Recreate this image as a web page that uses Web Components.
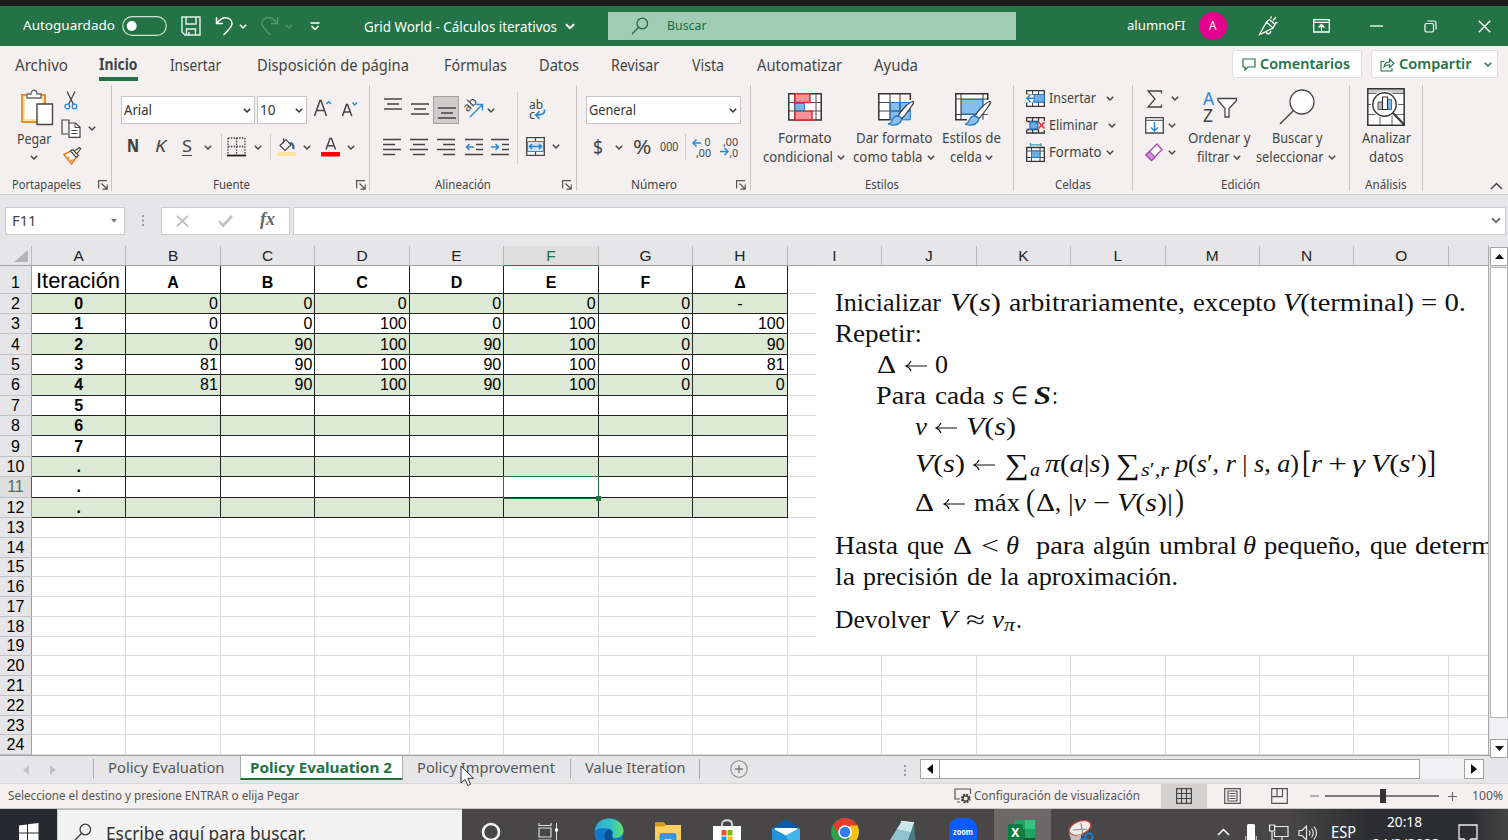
<!DOCTYPE html>
<html lang="es">
<head>
<meta charset="utf-8">
<title>Grid World - Cálculos iterativos</title>
<style>
html,body{margin:0;padding:0}
body{width:1508px;height:840px;overflow:hidden;background:#e6e6e8;font-family:"Noto Sans","Open Sans",sans-serif;color:#444}
excel-window{height:840px}
</style>
</head>
<body>
<excel-window></excel-window>
<script>
const ICONS = {
  chev:[8,5,'<path d="M.8.8 4 4 7.2.8" fill="none" stroke="currentColor" stroke-width="1.5"/>'],
  chevBig:[10,7,'<path d="M1 1.2 5 5.2 9 1.2" fill="none" stroke="currentColor" stroke-width="2"/>'],
  chevUp:[13,8,'<path d="M1 7 6.5 1.5 12 7" fill="none" stroke="currentColor" stroke-width="1.5"/>'],
  toggle:[45,20,'<rect x=".7" y=".7" width="43.6" height="18.6" rx="9.3" fill="none" stroke="#cfe3d7" stroke-width="1.2"/><circle cx="9.7" cy="10" r="5" fill="#fff"/>'],
  save:[20,20,'<path d="M1 1h18v18H4l-3-3zM5 1v7h10V1M5.500 19v-6h9v6M8 19v-3" fill="none" stroke="#e8f2ec" stroke-width="1.4"/>'],
  undo:[18,20,'<path d="M1.500 1v6.500h6.500M1.800 7.300C5 3 8 1.500 11 1.700c4 .3 6 3.300 6 6 0 3-3 6-8.500 11.300" fill="none" stroke="currentColor" stroke-width="1.5"/>'],
  redo:[18,20,'<path d="M16.500 1v6.500H10M16.200 7.300C13 3 10 1.500 7 1.700c-4 .3-6 3.300-6 6 0 3 3 6 8.500 11.300" fill="none" stroke="#57966f" stroke-width="1.4"/>'],
  custom:[10,9,'<path d="M.5 1h9M1.500 4 5 7.500 8.500 4" fill="none" stroke="#fff" stroke-width="1.5"/>'],
  lens:[18,18,'<circle cx="11.300" cy="6.500" r="5.300" fill="none" stroke="currentColor" stroke-width="1.2"/><path d="M7.500 10.500 1 17" stroke="currentColor" stroke-width="1.3"/>'],
  pen:[20,20,'<path d="M1.500 18.500 8.500 6l6.500 6L4 17.500zM8.500 6l3-2.500 5.500 5-2 3.500M8 16c1 2.500 4 2.500 5-1M12.500 2.500l1-2M15 4.500 18 1M17 7l2.500-.5" fill="none" stroke="#fff" stroke-width="1.3"/>'],
  ribbonMode:[17,14,'<path d="M.7.7h15.600v12.300H.7zM.7 3.300h15.600M8.500 12V6M5.500 8.500l3-3 3 3" fill="none" stroke="#fff" stroke-width="1.3"/>'],
  min:[13,2,'<path d="M0 1h13" stroke="#fff" stroke-width="1.300"/>'],
  restore:[13,13,'<rect x="1" y="3.500" width="8.500" height="8.500" rx="1.500" fill="none" stroke="#fff" stroke-width="1.2"/><path d="M3.500 1h6.500q2 0 2 2v6.500" fill="none" stroke="#fff" stroke-width="1.2"/>'],
  close:[13,13,'<path d="m.8.8 11.400 11.400M12.200.8.8 12.200" stroke="#fff" stroke-width="1.400"/>'],
  comment:[14,13,'<path d="M1 1h12v8H6l-3 3V9H1z" fill="none" stroke="#217346" stroke-width="1.2"/>'],
  share:[15,15,'<path d="M4.500 4.500H1V14h11v-3M4 10c.5-3.500 2.500-5 5.500-5V2l4.500 4.500-4.500 4V7.800C7 7.800 5.500 8.300 4 10z" fill="none" stroke="#217346" stroke-width="1.1"/>'],
  paste:[34,37,'<path d="M2 6h23v27H2z" fill="#fbe3a8" stroke="#e8912d" stroke-width="2"/><path d="M5 9h17v21H5z" fill="#fff"/><path d="M7 9V5h4c0-5 6-5 6 0h4v4z" fill="#fff" stroke="#666" stroke-width="1.300"/><path d="M17 15h15.500v20.500H17z" fill="#fff" stroke="#444" stroke-width="1.400"/>'],
  cut:[14,19,'<path d="M3 .5 9.500 13.500M11 .5 4.500 13.500" stroke="#444" stroke-width="1.300"/><circle cx="3.300" cy="15.500" r="2.300" fill="none" stroke="#2b88d8" stroke-width="1.300"/><circle cx="10.500" cy="15.500" r="2.300" fill="none" stroke="#2b88d8" stroke-width="1.300"/>'],
  copy:[20,19,'<path d="M8 4V1H1v14h6" fill="none" stroke="#444" stroke-width="1.200"/><path d="M8 4h6.500l4.500 4v10.300H8z" fill="#fff" stroke="#444" stroke-width="1.200"/><path d="M14 4v4.500h5M10.500 11.500h6M10.500 14.500h6" fill="none" stroke="#444"/>'],
  brush:[20,19,'<path d="M2 8.500 9 5l5.500 6-5 7z" fill="#fff" stroke="#e07b1c" stroke-width="1.500"/><path d="m2 8.500 3 3 2-1 .5 3.500 4-1-2 5z" fill="#f2a04a"/><path d="m8.500 5 2-1.500 6 6-2 2zM12.500 5 17.500 1.500l1.200 1.300L15 7.500" fill="#fff" stroke="#444" stroke-width="1.200"/>'],
  fontUp:[19,18,'<path d="M1.500 17 7 1.500h1L13.500 17M3.300 11.500h8.500" fill="none" stroke="#444" stroke-width="1.500"/><path d="m13.500 5 2.200-2.500L18 5" fill="none" stroke="#2b88d8" stroke-width="1.400"/>'],
  fontDown:[18,16,'<path d="M1.500 15 5.500 3.500h1L10.800 15M3 11h6.500" fill="none" stroke="#444" stroke-width="1.500"/><path d="m11.500 1.500 2.200 2.500L16 1.500" fill="none" stroke="#2b88d8" stroke-width="1.400"/>'],
  border:[19,20,'<path d="M1 1h17M1 9.500h17M1 1v17M9.500 1v17M18 1v17" stroke="#444" stroke-width="1.300" stroke-dasharray="1.500 1.300"/><path d="M0 18.500h19" stroke="#222" stroke-width="1.800"/>'],
  fill:[20,20,'<path d="m3 8.500 6-6 5 5.500-6 5.500zM6.500 1.500v5" fill="#fff" stroke="#444" stroke-width="1.200"/><path d="M13 6c3 0 3.500 2 3.500 6" fill="none" stroke="#1d6299" stroke-width="2.200"/><path d="M0 15h19v4H0z" fill="#fbe199"/>'],
  fontColor:[20,20,'<path d="m5 12.500 4-11h1.500l4 11M6.500 8.800h6.500" fill="none" stroke="#444" stroke-width="1.400"/><path d="M0 15h19v4.500H0z" fill="#f00"/>'],
  alTop:[18,12,'<path d="M0 1h18M3 6h12M0 11h18" stroke="#444" stroke-width="1.300"/>'],
  orient:[20,20,'<path d="m6 19 12-12M12.500 6.500h6v6" fill="none" stroke="#2b88d8" stroke-width="1.400"/><text x="0" y="0" transform="translate(3.500 14.500) rotate(-45)" font-size="12.500" fill="#444">ab</text>'],
  wrap:[18,20,'<text x="1" y="8.500" font-size="12.500" fill="#444" textLength="14" lengthAdjust="spacingAndGlyphs">ab</text><text x="1" y="18.500" font-size="12.500" fill="#444" textLength="6" lengthAdjust="spacingAndGlyphs">c</text><path d="M16.500 9.500c.5 4-2 5.500-8 5.500M11.500 11.300 7.800 15l3.700 3.700" fill="none" stroke="#2b88d8" stroke-width="1.700"/>'],
  alLeft:[18,18,'<path d="M0 1.500h18M0 6.500h12M0 11.500h18M0 16.500h12" stroke="#444" stroke-width="1.300"/>'],
  alCenter:[18,18,'<path d="M0 1.500h18M3 6.500h12M0 11.500h18M3 16.500h12" stroke="#444" stroke-width="1.300"/>'],
  alRight:[18,18,'<path d="M0 1.500h18M6 6.500h12M0 11.500h18M6 16.500h12" stroke="#444" stroke-width="1.300"/>'],
  outdent:[18,18,'<path d="M0 1.500h18M11 6.500h7M11 11.500h7M0 16.500h18" stroke="#444" stroke-width="1.300"/><path d="M9 9H1.500M4.500 6 1.500 9l3 3" fill="none" stroke="#2b88d8" stroke-width="1.500"/>'],
  indent:[18,18,'<path d="M0 1.500h18M11 6.500h7M11 11.500h7M0 16.500h18" stroke="#444" stroke-width="1.300"/><path d="M0 9h7.500M4.500 6l3 3-3 3" fill="none" stroke="#2b88d8" stroke-width="1.500"/>'],
  merge:[19,19,'<path d="M.7.7h17.600v17.600H.7zM9.500.7v17.600" fill="#fff" stroke="#444" stroke-width="1.300"/><path d="M1.500 4.500h16v10h-16z" fill="#cfe5f7" stroke="#2b88d8"/><path d="M3.500 9.500h12M6 7 3.500 9.500 6 12M13 7l2.500 2.500L13 12" fill="none" stroke="#1f7fd0" stroke-width="1.400"/>'],
  decUp:[20,20,'<path d="M9 6H1M4.500 2.500 1 6l3.500 3.500" fill="none" stroke="#2b88d8" stroke-width="1.500"/><text x="12.500" y="9" font-size="11.500" fill="#444" textLength="6" lengthAdjust="spacingAndGlyphs">0</text><text x="4" y="19.500" font-size="11.500" fill="#444" textLength="15" lengthAdjust="spacingAndGlyphs">,00</text>'],
  decDown:[20,20,'<path d="M1 14.500h8M5.500 11 9 14.500 5.500 18" fill="none" stroke="#2b88d8" stroke-width="1.500"/><text x="4" y="9" font-size="11.500" fill="#444" textLength="15" lengthAdjust="spacingAndGlyphs">,00</text><text x="10.500" y="19.500" font-size="11.500" fill="#444" textLength="8.500" lengthAdjust="spacingAndGlyphs">,0</text>'],
  cond:[34,28,'<path d="M.8.800h32.400v26.200H.8z" fill="#fff"/><path d="M.8 9.500h32.400M.8 18h32.400M6.500.8v26.200M17 .8v26M28 .8v26.200" stroke="#555" stroke-width="1.100"/><path d="M.8.800h32.400v26.200H.8z" fill="none" stroke="#333" stroke-width="1.500"/><path d="M7 10h15v8H7z" fill="#fff"/><path d="M7 .8h15v8.700H7zM7 18h17v9H7z" fill="#fc9299" stroke="#e0262e" stroke-width="1.400"/><path d="M7 10.500h9.500v7H7z" fill="#7db4e8" stroke="#2b7cc8"/>'],
  tabla:[37,34,'<path d="M.8.800h31.500v26H.8z" fill="#fff"/><path d="M12 9.500h20.300v17.300H12z" fill="#83bdf0"/><path d="M.8 9.500h31.500M.8 18h31.500M12 .8v26M22 .8v26" stroke="#444" stroke-width="1.100"/><path d="M12 9.500h20.300v17.300H12zM12 18h20M22 9.500v17" fill="none" stroke="#2478c5" stroke-width="1"/><path d="M32.300 7V.8H.8v26H12" fill="none" stroke="#333" stroke-width="1.500"/><path d="M20 23C24 16 31 9.500 34.500 8.500c2 0 1 2-.5 4-3 4.500-6 9-10 13z" fill="#fff" stroke="#444" stroke-width="1.300"/><path d="M19 23c4 0 6 3 3.500 6-2.500 3-8 4-12.500 2 3 0 4-3 5-5.500 1-2 2.500-2.500 4-2.500z" fill="#8cc0ef" stroke="#2478c5" stroke-width="1.300"/>'],
  celda:[38,34,'<path d="M.8.800h32v26H.8z" fill="#fff"/><path d="M.8 6h32M.8 21.500h32M6 .8v26M28 .8v26" stroke="#444" stroke-width="1.100"/><path d="M6.500 6.500h21V21h-21z" fill="#83bdf0" stroke="#2478c5"/><path d="M32.800 7V.8h-32v26H12" fill="none" stroke="#333" stroke-width="1.500"/><path d="M20 23C24 16 31 9.500 34.500 8.500c2 0 1 2-.5 4-3 4.500-6 9-10 13z" fill="#fff" stroke="#444" stroke-width="1.300"/><path d="M19 23c4 0 6 3 3.500 6-2.500 3-8 4-12.500 2 3 0 4-3 5-5.500 1-2 2.500-2.500 4-2.500z" fill="#8cc0ef" stroke="#2478c5" stroke-width="1.300"/>'],
  insCell:[19,18,'<path d="M.7.7h17.600v15.600H.7z" fill="#fff"/><path d="M.7 4.500h17.600M.7 12h17.600M6.500.7v16M12.500.7v16" stroke="#444" stroke-width="1"/><path d="M.7.700h17.600v15.600H.7z" fill="none" stroke="#333" stroke-width="1.300"/><path d="M8 4.500h10.300V12H8z" fill="#6eaee8" stroke="#2478c5"/><path d="M0 4.500h7v8H0z" fill="#fff"/><path d="M9 8.300H1M4.500 4.500.8 8.300 4.500 12" fill="none" stroke="#2b88d8" stroke-width="1.500"/>'],
  delCell:[19,17,'<path d="M.7 4V.7h17.600V4M.7 13v3h17.600v-3M6.500.7v3M12.500.7v3M6.500 13v3M12.500 13v3M.7 4.500h12M.7 12.500h12" fill="none" stroke="#333" stroke-width="1.300"/><path d="M4 5h5c4 0 4 7 0 7H4z" fill="#6eaee8" stroke="#2478c5" stroke-width="1.300"/><path d="m12.500 5 6 6.500M18.500 5l-6 6.500" stroke="#e8353e" stroke-width="1.800"/>'],
  fmtCell:[19,19,'<path d="M.7 4.500h17.600v13.800H.7z" fill="#fff" stroke="#333" stroke-width="1.300"/><path d="M.7 8h17.600M.7 14.500h17.600M5.500 4.500v14M14 4.500v14" stroke="#444"/><path d="M5.500 8H14v6.500H5.500z" fill="#6eaee8" stroke="#2478c5"/><path d="M4.500 1.800h10.500M4.500 0v3.500M15 0v3.500" stroke="#3a9ab8" stroke-width="1.200"/>'],
  sigma:[16,18,'<path d="M14.500 3.500V1H1l7 8-7 8h13.500v-2.500" fill="none" stroke="#444" stroke-width="1.300"/>'],
  fillDown:[19,17,'<path d="M.7.700h17.600v15.300H.7z" fill="#fff" stroke="#444" stroke-width="1.300"/><path d="M.7 3.300h17.600" stroke="#444"/><path d="M9.500 5v9M6 10.500 9.500 14l3.500-3.500" fill="none" stroke="#2b88d8" stroke-width="1.500"/>'],
  eraser:[18,19,'<path d="M1 12 12 1l5 5.500L6.500 17.500z" fill="#fff" stroke="#a54eb0" stroke-width="1.400"/><path d="m1 12 3.500-3.500 5.500 5.500-3.500 3.500z" fill="#d78fe0" stroke="#a54eb0" stroke-width="1.200"/>'],
  sortFilter:[35,34,'<text x="0" y="14.500" font-size="17.500" fill="#2b88d8">A</text><text x="0" y="31.500" font-size="17.500" fill="#444">Z</text><path d="M15 8.500h18.500v2L26 18.500V27h-4v-8.500L15 10.500z" fill="#fff" stroke="#444" stroke-width="1.300"/>'],
  find:[36,36,'<circle cx="23" cy="13" r="12" fill="#fdfdfd" stroke="#444" stroke-width="1.300"/><path d="M14.500 21.500 1 35" stroke="#444" stroke-width="1.500"/>'],
  analyze:[38,38,'<path d="M.8.800h36.400v36.400H.8z" fill="#fff"/><path d="M1 1h36v4.500H1z" fill="#c9c9c9"/><path d="M.8 5.500h36.400M.8 16.500h36.400M.8 26.500h36.400M13 26v11M25 26v11" stroke="#666" stroke-width="1"/><path d="M.8.800h36.400v36.400H.8z" fill="none" stroke="#333" stroke-width="1.500"/><circle cx="17.500" cy="16.500" r="13.500" fill="#fff"/><circle cx="17.500" cy="16.500" r="11.700" fill="#fff" stroke="#333" stroke-width="1.400"/><path d="M11 14h4.500v7.500H11z" fill="#bbb" stroke="#555"/><path d="M20.500 11.500h4v10h-4z" fill="#83bdf0" stroke="#2478c5"/><path d="M15.500 9h5v12.500h-5z" fill="#fff" stroke="#333" stroke-width="1.200"/><path d="m26 25 11.500 12" stroke="#333" stroke-width="2"/>'],
  launch:[10,10,'<path d="M.6 8.500V.6H9M3.500 3.500 9 9M9.200 4.500v4.700H4.500" fill="none" stroke="#555" stroke-width="1.200"/>'],
  dots:[2,11,'<path d="M0 0h2v2H0zM0 4.500h2v2H0zM0 9h2v2H0z" fill="#999"/>'],
  cancel:[13,12,'<path d="m1 .8 11 10.500M12 .8 1 11.300" stroke="#bdbdbd" stroke-width="1.800"/>'],
  check:[15,12,'<path d="m1 6 4 4.500L14 1" fill="none" stroke="#c2c2c2" stroke-width="2.600"/>'],
  caret:[6,4,'<path d="M0 0h6L3 3.500z" fill="#777"/>'],
  triL:[6,10,'<path d="M6 0v10L0 5z" fill="currentColor"/>'],
  triR:[6,10,'<path d="M0 0v10l6-5z" fill="currentColor"/>'],
  triU:[9,5,'<path d="M0 5h9L4.500 0z" fill="#111"/>'],
  triD:[9,5,'<path d="M0 0h9L4.500 5z" fill="#111"/>'],
  corner:[14,12,'<path d="M14 0v12H0z" fill="#b4b4b6"/>'],
  plus:[18,18,'<circle cx="9" cy="9" r="8.200" fill="none" stroke="#888" stroke-width="1.100"/><path d="M9 5v8M5 9h8" stroke="#777" stroke-width="1.300"/>'],
  display:[18,16,'<path d="M6 11H1V1h15.500v5M3 14h3" fill="none" stroke="#555" stroke-width="1.200"/><circle cx="11.700" cy="10.500" r="3.700" fill="none" stroke="#444" stroke-width="2.400" stroke-dasharray="1.900 1"/><circle cx="11.700" cy="10.500" r="2.600" fill="none" stroke="#444" stroke-width="1.200"/>'],
  vNormal:[16,16,'<path d="M.6.600h14.800v14.800H.6zM.6 5.500h14.800M.6 10.500h14.800M5.500.6v14.800M10.500.6v14.800" fill="none" stroke="#444" stroke-width="1.200"/>'],
  vPage:[17,16,'<path d="M.7.700h15.600v14.600H.7zM4 3h9v10H4zM5.500 5.500h6M5.500 8h6M5.500 10.500h6" fill="none" stroke="#555" stroke-width="1.200"/>'],
  vBreak:[17,16,'<path d="M.7.700h15.600v14.600H.7zM6 .7v8M11.500.7v8H.7" fill="none" stroke="#555" stroke-width="1.200"/>'],
  minus:[9,2,'<path d="M0 1h9" stroke="#777" stroke-width="1.100"/>'],
  plusS:[9,9,'<path d="M0 4.500h9M4.500 0v9" stroke="#666" stroke-width="1.100"/>'],
  slider:[114,14,'<path d="M0 7h114" stroke="#555" stroke-width="1.600"/><path d="M55 0h6v14h-6z" fill="#333"/>'],
  win:[20,20,'<path d="M0 2.500 8 1.500v8H0zM9 1.300 19.500 0v9.500H9zM0 10.500h8v8.300L0 17.500zM9 10.500h10.500V20L9 18.800z" fill="#fff"/>'],
  cortana:[20,20,'<circle cx="10" cy="10" r="8" fill="none" stroke="#f4f4f4" stroke-width="2.600"/>'],
  taskview:[20,20,'<path d="M1 0v2.500h12V0M1 20v-3h12v3M1 5h12v9H1z" fill="none" stroke="#ddd" stroke-width="1.200"/><path d="M18.500 0v20" stroke="#ddd"/><path d="M17 5.500h3v3h-3z" fill="#fff"/>'],
  edge:[30,30,'<defs><linearGradient id="g" x1="0" x2="1"><stop offset="0" stop-color="#2ba5e0"/><stop offset=".6" stop-color="#35c5c0"/><stop offset="1" stop-color="#66e06a"/></linearGradient></defs><circle cx="15" cy="15" r="14.500" fill="#1277c8"/><path d="M.5 13C2 4 8 .5 15 .5c8 0 14.500 5.500 14.500 12 0 5-4 7.500-9 7.500-3 0-4-1.500-2.500-3 2-3-.5-6.500-5-6.500C7 9.500 2 11.500.5 13z" fill="url(#g)"/><path d="M18 17c2-3-.5-5.500-3.500-5.500-4 2-5 7-3 11 2 3.500 6 5 10 4.500" fill="#0c4f94"/>'],
  folder:[26,24,'<path d="M0 1.500h9l2 2.500h15v20H0z" fill="#fbd064"/><path d="M0 1.500h9l2 2.500-2 1.500H0z" fill="#d99a1c"/><path d="M4.500 14q0-2 2-2h13q2 0 2 2v10h-5v-6h-7v6h-5z" fill="#3c94dd"/>'],
  store:[28,28,'<path d="M9 8V5c0-5 10-5 10 0v3" fill="none" stroke="#ddd" stroke-width="1.800"/><path d="M0 7h28v21H0z" fill="#fff"/><path d="M8.500 11h5v5.500h-5z" fill="#f25022"/><path d="M14.500 11h5v5.500h-5z" fill="#7fba00"/><path d="M8.500 17.500h5V23h-5z" fill="#00a4ef"/><path d="M14.500 17.500h5V23h-5z" fill="#ffb900"/>'],
  mail:[28,28,'<path d="M0 9 14 0l14 9-14 6z" fill="#0a5ba6"/><path d="M2.500 9h23v10h-23z" fill="#fff"/><path d="M0 9l14 7.500L28 9v19H0z" fill="#1f93dc"/><path d="M14 16.500 28 9v19H18z" fill="#42b4ee"/>'],
  chrome:[28,28,'<circle cx="14" cy="14" r="14" fill="#2ea04a"/><path d="M2 7a14 14 0 0 1 24.200 0L28 9H14l-5.500 8z" fill="#e33b2e"/><path d="M26.300 7.500A14 14 0 0 1 14 28l6-11-1.500-9.500z" fill="#fbc116"/><circle cx="14" cy="14" r="6.800" fill="#fff"/><circle cx="14" cy="14" r="5.300" fill="#2f7de9"/>'],
  note:[26,26,'<path d="M12 1 24 3 17 24 0 20z" fill="#8fc3cd"/><path d="M12 1 24 3l-3 9L7 9z" fill="#c9e6ea"/><path d="m24 3 1.500 20L17 24z" fill="#4d7a84"/><path d="M11 1.500 24 3" stroke="#e8e8e8" stroke-width="1.600"/>'],
  zoom:[28,28,'<rect width="28" height="29" rx="10" fill="#0b5cff"/><text x="4" y="17" font-size="8" font-weight="700" fill="#fff" textLength="20" lengthAdjust="spacingAndGlyphs">zoom</text>'],
  excel:[28,26,'<path d="M7 0h20v26H7z" fill="#21a366"/><path d="M17 0h10v9H17z" fill="#33c481"/><path d="M7 9h10v9H7z" fill="#107c41"/><path d="M17 9h10v9H17z" fill="#21a366"/><path d="M7 18h20v8H7z" fill="#185c37"/><rect y="4" width="15" height="17" rx="1.500" fill="#107c41"/><text x="3.200" y="16.500" font-size="12" font-weight="700" fill="#fff">X</text>'],
  snip:[27,26,'<ellipse cx="12" cy="8" rx="11.500" ry="6.500" transform="rotate(-22 12 8)" fill="#eee" stroke="#c4463a" stroke-width="1.300"/><path d="M13 3l2 13M5 10l14-1" stroke="#888" stroke-width="1.200"/><path d="M1 13q5 5 12 1v6H3z" fill="#c9bdb9"/><circle cx="21" cy="17" r="3.500" fill="none" stroke="#1d78c1" stroke-width="2.400"/><circle cx="15" cy="22" r="3" fill="none" stroke="#1d78c1" stroke-width="2.400"/>'],
  mic:[12,22,'<rect x="2" width="8" height="17" rx="1.500" fill="#fff"/><path d="M.7 12v4q0 3 5.300 3t5.300-3v-4" fill="none" stroke="#ccc" stroke-width="1.200"/>'],
  net:[20,18,'<path d="M6 2.500h13v10H5.500V8M9 16.500h9M13 12.500v4" fill="none" stroke="#eee" stroke-width="1.200"/><path d="M.6 1h5v6H.6zM3 7v9h3" fill="none" stroke="#eee" stroke-width="1.200"/>'],
  speaker:[19,16,'<path d="M1 5.500h3L8.500 1v14L4 10.500H1zM11 5.500q2 2.500 0 5M13.500 3.500q3.500 4.500 0 9M16 1.500q5 6.500 0 13" fill="none" stroke="#eee" stroke-width="1.100"/>'],
  notif:[20,20,'<path d="M1 1h18v14h-6l-3.500 3.500L6 15H1z" fill="none" stroke="#eee" stroke-width="1.300"/>'],
  cursor:[15,22,'<path d="M1 1v17l4-3.500 2.800 6 2.700-1.200-2.700-6H13.500z" fill="#fff" stroke="#333" stroke-width="1"/>'],
  larr:[22,12,'<path d="M1 6h21M6 1C5 3.500 3.500 5 1 6c2.500 1 4 2.500 5 5" fill="none" stroke="#111" stroke-width="1.200"/>']
};

/* Base for components whose shadow tree is a stylesheet plus markup. */
class View extends HTMLElement {
  constructor(){ super(); this.attachShadow({mode:'open'}); }
  connectedCallback(){
    if(this.shadowRoot.firstChild) return;
    this.shadowRoot.innerHTML = `<style>:host{display:block;box-sizing:border-box}*{box-sizing:border-box}
      .strip{display:flex;align-items:center}.strip>*{flex:none}${this.css()}</style>${this.view()}`;
  }
  css(){ return ''; } view(){ return '<slot></slot>'; }
}

/* One line of text condensed or expanded to a given width. */
customElements.define('fit-text', class extends HTMLElement {
  constructor(){ super(); this.attachShadow({mode:'open'}).innerHTML =
    '<style>:host{display:block;white-space:nowrap;line-height:1.2}span{display:inline-block;transform-origin:0 50%}</style><span><slot></slot></span>'; }
  connectedCallback(){
    const w = +this.getAttribute('w'), s = this.shadowRoot.querySelector('span');
    this.style.width = w + 'px';
    const n = s.getBoundingClientRect().width;
    if(n) s.style.transform = `scaleX(${w / n})`;
  }
});

customElements.define('ui-icon', class extends HTMLElement {
  constructor(){ super(); this.attachShadow({mode:'open'}); }
  connectedCallback(){
    const [w,h,body] = ICONS[this.getAttribute('name')];
    this.shadowRoot.innerHTML = `<style>:host{display:block;width:${w}px;height:${h}px}svg{display:block;overflow:visible}</style><svg width="${w}" height="${h}" viewBox="0 0 ${w} ${h}">${body}</svg>`;
  }
});

/* Item builders: each gives [start, width, markup]; strip() lines them up with gaps. */
const T = (x, w, size, text, st='') => [x, w, `<fit-text w="${w}" style="font-size:${size}px;${st}">${text}</fit-text>`];
const I = (x, name, st='') => [x, ICONS[name][0], `<ui-icon name="${name}" style="${st}"></ui-icon>`];
const B = (x, w, html, st='', cls='') => [x, w, `<div class="${cls}" style="width:${w}px;${st}">${html}</div>`];
const strip = (x0, h, items, st='') => {
  let at = x0;
  return `<div class="strip" style="height:${h}px;${st}">` + items.map(([x,w,html]) => {
    const gap = x - at; at = x + w;
    return `<div style="margin-left:${gap}px;width:${w}px">${html}</div>`;
  }).join('') + '</div>';
};

customElements.define('title-bar', class extends View {
  css(){ return `:host{height:46px;background:#237346;border-top:6px solid #1b1b1b;color:#fff}
    .search{height:28px;background:#a0cdb4;color:#1d6a3f}.ava{height:28px;border-radius:50%;background:#e3008c;display:grid;place-items:center}`; }
  view(){ return strip(0,40,[
    T(23,92,13.3,'Autoguardado'), I(122,'toggle'), I(181,'save'), I(215,'undo'), I(239,'chev'), I(261,'redo'),
    I(284.5,'chev','color:#57966f'), I(309.5,'custom'), T(364,193,13.5,'Grid World - Cálculos iterativos','margin-top:2px'), I(564.5,'chevBig'),
    B(608,408,strip(608,28,[I(631,'lens'),T(666.5,39.5,13.3,'Buscar')]),'','search'),
    T(1127,58.500,13.300,'alumnoFI'), B(1198.500,28,'<fit-text w="7.500" style="font-size:12px">A</fit-text>','','ava'),
    I(1258,'pen'), I(1312.500,'ribbonMode'), I(1369.500,'min'), I(1423.500,'restore'), I(1478,'close')]); }
});

customElements.define('ribbon-tabs', class extends View {
  css(){ return `:host{height:38px;background:#f3f0ef}.on{height:28px;border-bottom:4px solid #217346;padding-top:2px}
    .btn{background:#fff;border:1px solid #e1dfdd;border-radius:3px;height:28px;color:#217346;font-weight:600}`; }
  view(){
    const tab = (x,w,t) => T(x,w,16,t,'margin-top:1px');
    return strip(0,38,[tab(15,53,'Archivo'), B(99,39,'<fit-text w="38.500" style="font-size:16px;font-weight:700">Inicio</fit-text>','margin-top:4px','on'),
    tab(170,51,'Insertar'), tab(257,152,'Disposición de página'), tab(443.500,63,'Fórmulas'), tab(539,40,'Datos'), tab(611,48,'Revisar'),
    tab(692,32,'Vista'), tab(757,85,'Automatizar'), tab(873.500,44,'Ayuda'),
    B(1232,130,strip(1233,26,[I(1242,'comment'),T(1260,90,14.500,'Comentarios')]),'margin-top:-2px','btn'),
    B(1371,127,strip(1372,26,[I(1380,'share'),T(1399,72.500,14.500,'Compartir'),I(1484,'chev')]),'margin-top:-2px','btn')]); }
});

customElements.define('ribbon-group', class extends View {
  css(){ return `:host{display:flex;flex-direction:column;height:106px;flex:none;margin-top:1px;border-right:1px solid #c8c6c4}
    .body{height:91px;flex:none}.strip{flex:none}`; }
  view(){
    const [x0,x,w,l] = this.getAttribute('foot').split(',').map(Number);
    const items = [T(x,w,12.200,this.getAttribute('label'),'color:#444')];
    if(l) items.push(I(l,'launch'));
    return `<div class="body"><slot></slot></div>${strip(x0,16,items,'margin-top:1px')}`; }
});

customElements.define('combo-box', class extends View {
  css(){ return `:host{height:28px;background:#fff;border:1px solid #c8c6c4;display:flex;align-items:center;justify-content:space-between;padding:0 3px 0 2px;color:#333}`; }
  view(){ return `<slot></slot><ui-icon name="chev"></ui-icon>`; }
});

customElements.define('office-ribbon', class extends View {
  css(){ return `:host{display:flex;height:111px;background:#f3f0ef;border-bottom:1px solid #cfcdcc}
    .cols{display:flex;align-items:flex-start}.on{background:#cfcdcc;border:1px solid #a5a3a1;height:28px;display:grid;place-items:center}
    .last{margin:0 5px 4px auto;align-self:flex-end}.v{background:#cfcdcc;width:1px}`; }
  view(){
    const grp = (w,foot,label,html) => `<ribbon-group style="width:${w}px" foot="${foot}" label="${label}">${html}</ribbon-group>`;
    const combo = (x,w,tw,t) => [x,w,`<combo-box style="width:${w}px"><fit-text w="${tw}" style="font-size:14px">${t}</fit-text></combo-box>`];
    const c = x => I(x,'chev');
    const sep = (x,h,st='') => [x,1,`<div class="v" style="height:${h}px;${st}"></div>`];
    const big = (x0,w,ic,ix,ih,l1,l2) => `<div style="width:${w}px">${strip(x0,44,[I(ix,ic)],'align-items:'+ih)}${strip(x0,19,l1)}${strip(x0,19,l2)}</div>`;
    return grp(112,'0,11.500,69,97.500','Portapapeles',`<div class="cols"><div style="width:57px">${strip(0,45,[I(20,'paste')])}${strip(0,19,[T(16.500,34.500,13.800,'Pegar')])}${strip(0,16,[c(29.500)])}</div>
      <div>${strip(57,30,[I(64,'cut')])}${strip(57,27,[I(61,'copy'),c(87.500)])}${strip(57,27,[I(62,'brush')])}</div></div>`)
    + grp(258,'112,213,37,356','Fuente', strip(112,28,[combo(121,134,28,'Arial'),combo(257,50,15.500,'10'),I(313,'fontUp','margin-top:-5px'),I(341,'fontDown','margin-top:-3px')],'margin-top:11px')
      + strip(112,30,[T(127,12,17,'N','font-weight:800;color:#444;margin-top:-2px'),T(155,11,17,'K','font-style:italic;margin-top:-2px'),T(182,10,17,'<u style="text-underline-offset:3px;text-decoration-thickness:1px">S</u>','margin-top:-2px'),c(204),sep(220.500,26),I(227,'border'),c(253.500),sep(270,26),I(277,'fill'),c(303),I(321,'fontColor'),c(347)],'margin-top:8px'))
    + grp(206.500,'370,435,56,562','Alineación', `<div class="cols"><div style="width:147px">` + strip(370,28,[I(383.500,'alTop','margin-top:-12px'),I(410.500,'alTop','margin-top:-2px'),B(433,26,'<ui-icon name="alTop" style="margin-top:6px;width:17px"></ui-icon>','','on'),I(464,'orient','margin-top:-4px'),c(487)],'margin-top:11px')
      + strip(370,30,[I(383,'alLeft'),I(410,'alCenter'),I(437,'alRight'),I(465,'outdent'),I(491,'indent')],'margin-top:8px') + `</div><div class="v" style="height:72px;margin-top:7px"></div><div>`
      + strip(518,28,[I(528,'wrap')],'margin-top:11px') + strip(518,30,[I(526,'merge'),c(552)],'margin-top:7px') + `</div></div>`)
    + grp(174,'576.500,631,46,736','Número', strip(576.500,28,[combo(586,155,47,'General')],'margin-top:11px')
      + strip(576.500,30,[T(592.500,10,19,'$'),c(615),T(633,18.500,19,'%'),T(660,18.500,12.500,'000','margin-top:-2px'),sep(685,26),I(692,'decUp'),I(719,'decDown')],'margin-top:8px'))
    + grp(263,'750.500,864.500,34,0','Estilos', `<div class="cols">`
      + big(750.500,98,'cond',788,'center',[T(778,53.500,13.800,'Formato')],[T(762.500,70,13.800,'condicional'),c(837)])
      + big(848.500,90,'tabla',878,'flex-end;padding-bottom:2px',[T(856,76.500,13.800,'Dar formato')],[T(852.500,69.500,13.800,'como tabla'),c(927)])
      + big(938.500,70,'celda',955,'flex-end;padding-bottom:2px',[T(942,59,13.800,'Estilos de')],[T(949.500,32,13.800,'celda'),c(985)]) + `</div>`)
    + grp(119,'1013.500,1054.500,36,0','Celdas', strip(1013.500,27,[I(1026,'insCell'),T(1048.500,47,13.500,'Insertar'),c(1105.500)])
      + strip(1013.500,27,[I(1026,'delCell'),T(1048.500,49,13.500,'Eliminar'),c(1108)]) + strip(1013.500,27,[I(1026,'fmtCell'),T(1048.500,52.500,13.500,'Formato'),c(1105.500)]))
    + grp(217,'1132.500,1221,39,0','Edición', `<div class="cols"><div style="width:51px">`
      + strip(1132.500,27,[I(1146.500,'sigma'),c(1171)]) + strip(1132.500,27,[I(1145,'fillDown'),c(1168)]) + strip(1132.500,27,[I(1145,'eraser'),c(1168)]) + `</div>`
      + big(1183.500,70,'sortFilter',1203,'center',[T(1188,62.500,13.800,'Ordenar y')],[T(1197,32.500,13.800,'filtrar'),c(1233)])
      + big(1253.500,90,'find',1279,'center',[T(1271.500,50.500,13.800,'Buscar y')],[T(1256,67.500,13.800,'seleccionar'),c(1328)]) + `</div>`)
    + grp(73.500,'1349.500,1365,41.500,0','Análisis', big(1349.500,72,'analyze',1367,'center',[T(1361.500,49,13.800,'Analizar')],[T(1369,34.500,13.800,'datos')]))
    + `<ui-icon class="last" name="chevUp"></ui-icon>`;
  }
});

customElements.define('formula-bar', class extends View {
  css(){ return `:host{height:51px;background:#e6e6e8}.b{background:#fff;border:1px solid #cbcbcd;height:28px}`; }
  view(){ return strip(0,51,[
    B(5,120,strip(6,26,[T(11.500,24.500,15,'F11','margin-top:-1px'),I(110.500,'caret')]),'','b'), I(141.500,'dots'),
    B(161,129,strip(162,26,[I(176,'cancel'),I(218,'check'),T(260,15,19,'fx','font-family:\'Liberation Serif\',serif;font-style:italic;font-weight:700;color:#666;margin-top:-2px')]),'','b'),
    B(293,1213,strip(294,26,[I(1491,'chevBig','color:#777')]),'','b')]); }
});

customElements.define('sheet-grid', class extends View {
  css(){ return `:host{height:509px;display:grid;grid-template-columns:1489px 1fr;background:#e6e6e8;font-family:"Liberation Sans",Arial,sans-serif;color:#000}
    .area{position:relative;height:509px;overflow:hidden;border-right:1px solid #a9a9ab}
    .g{display:grid;width:1600px;grid-template-columns:31.900px repeat(16,94.470px);grid-template-rows:20px 27.500px repeat(11,20.420px) repeat(12,19.770px)}
    .g>div{display:flex;align-items:center;justify-content:center;font-size:16px;background:#fff;border-right:1px solid #dcdcde;border-bottom:1px solid #dcdcde;min-width:0;padding-top:1px;line-height:1}
    .g>.h{background:#e6e6e8;border-right:1px solid #b9b9bb;border-bottom:1px solid #a0a0a2;font-size:15.500px;color:#222}
    .g>.r{background:#e6e6e8;border-bottom:1px solid #c2c2c4;border-right:1px solid #a0a0a2;font-size:16px}
    .g>.hs{background:#dededf;color:#217346;border-bottom:1px solid #217346}.g>.rs{background:#dededf;color:#4c6f5c;border-right:1px solid #217346}
    .g>.t{border-color:#222}.g>.e{background:#dce9d5}.g>.n{justify-content:flex-end;padding-right:2px;font-size:16px}.g>.k{font-weight:700}
    .g>.low{align-items:flex-end;padding-bottom:2px}
    .sel{position:absolute;left:502.500px;top:230px;width:96px;height:23px;border:1.500px solid #217346}
    .sel:after{content:"";position:absolute;right:-3px;bottom:-3px;width:5px;height:5px;background:#217346}
    algorithm-picture{position:absolute;left:816px;top:21px}
    .bar{display:flex;flex-direction:column;width:18px;margin-left:1px;padding-top:1px;position:relative;z-index:2}
    .bar>*{flex:none}
    .bb{height:19px;background:#fff;border:1px solid #a2a2a4;display:grid;place-items:center}
    .thumb{height:451px;background:#fff;border:1px solid #b2b2b4;margin-top:1px}.track{height:21px;background:#f1f1f3}`; }
  view(){
    const cols = 'ABCDEFGHIJKLMNOP'.split('');
    const head = ['Iteración','A','B','C','D','E','F','Δ'];
    const data = {2:[0,0,0,0,0,0,'-'],3:[0,0,100,0,100,0,100],4:[0,90,100,90,100,0,90],5:[81,90,100,90,100,0,81],6:[81,90,100,90,100,0,0]};
    const first = {2:'0',3:'1',4:'2',5:'3',6:'4',7:'5',8:'6',9:'7',10:'.',11:'.',12:'.'};
    let s = '<div class="h" style="justify-content:flex-end"><ui-icon name="corner" style="margin-right:3px"></ui-icon></div>' + cols.map(c=>`<div class="h ${c=='F'?'hs':''}">${c=='P'?'':c}</div>`).join('');
    for(let r=1;r<=24;r++){
      s += `<div class="r ${r==11?'rs':''} ${r==1?'low':''}">${r}</div>`;
      cols.forEach((_,i)=>{
        let cls = r<=12&&i<8?'t ':'', v='';
        if(cls && r>1 && r%2==0) cls+='e ';
        if(cls && r==1){ v=head[i]; cls+= i?'k low ':''; if(!i) v='<fit-text w="84" style="font-size:22px;margin:2px 2px 0 0">Iteración</fit-text>'; }
        else if(cls && i==0){ v=first[r]; cls+='k '; }
        else if(cls && data[r]){ v=data[r][i-1]; cls+= v==='-'?'':'n '; }
        s += `<div class="${cls}">${v}</div>`;
      });
    }
    return `<div class="area"><div class="g">${s}</div><div class="sel"></div><algorithm-picture></algorithm-picture></div>
      <div class="bar"><div class="bb"><ui-icon name="triU"></ui-icon></div><div class="thumb"></div><div class="track"></div><div class="bb"><ui-icon name="triD"></ui-icon></div></div>`;
  }
});

customElements.define('algorithm-picture', class extends View {
  css(){ return `:host{width:672px;height:388px;background:#fefefe;overflow:hidden;font-family:"Liberation Serif",serif;color:#111;padding-top:20px}i{font-style:italic}`; }
  view(){
    const F=25, m='font-style:italic';
    const t=(x,w,s,st='')=>T(x,w,F,s,st), L=(h,it)=>strip(816,h,it);
    const D=x=>t(x,19,'Δ'), A=x=>I(x,'larr','margin-top:2px'), S=x=>T(x,24,29,'∑');
    return L(31,[t(835,106,'Inicializar'),t(950,51,'<i>V</i>(<i>s</i>)'),t(1009,176,'arbitrariamente,'),t(1193,83,'excepto'),t(1283,131,'<i>V</i>(terminal)'),t(1421,45,'= 0.')])
    + L(31,[t(835,87,'Repetir:')])
    + L(31,[D(876.500),A(904.500),t(934.500,13,'0')])
    + L(31,[t(876,50,'Para'),t(934.500,50,'cada'),t(993,11,'s',m),t(1011,17,'∈'),t(1034,17,'S',m+';font-weight:700'),t(1051.500,6,':')])
    + L(31,[t(914.500,12,'v',m),A(934.500),t(966,50,'<i>V</i>(<i>s</i>)')])
    + L(44,[t(915,50,'<i>V</i>(<i>s</i>)'),A(973),S(1004.500),T(1029.500,10,18,'a',m+';margin-top:14px'),t(1045,15,'π',m),t(1060,50,'(<i>a</i>|<i>s</i>)'),S(1116),T(1141,28,18,'<i>s</i>′,<i>r</i>','margin-top:14px'),
        t(1175,124,'<i>p</i>(<i>s</i>′, <i>r</i> | <i>s</i>, <i>a</i>)'),T(1302,9,32,'[','margin-top:-4px'),t(1311,11,'r',m),t(1328,19,'+'),t(1352,13,'γ',m),t(1371,56,'<i>V</i>(<i>s</i>′)'),T(1427,9,32,']','margin-top:-4px')])
    + L(33,[D(914.500),A(943),t(973.500,46,'máx'),T(1026,9,32,'(','margin-top:-4px'),D(1035.500),t(1055,6,','),t(1068,18,'|<i>v</i>'),t(1093,17,'−'),t(1117,50,'<i>V</i>(<i>s</i>)'),t(1167,6,'|'),T(1175,9,32,')','margin-top:-4px')])
    + strip(816,31,[t(835,63,'Hasta'),t(906.500,37,'que'),D(952.500),t(981,18,'&lt;'),t(1005.500,13,'θ',m),t(1035.500,49,'para'),t(1093,57.500,'algún'),t(1158.500,78,'umbral'),t(1243,13,'θ',m),t(1264,97,'pequeño,'),t(1370,37,'que'),t(1415,78,'determ')],'margin-top:11px')
    + L(31,[t(835,20,'la'),t(863,95,'precisión'),t(966.500,25,'de'),t(1000,19,'la'),t(1027,151,'aproximación.')])
    + strip(816,31,[t(835,95,'Devolver'),t(939,18,'V',m),t(965.500,19,'≈'),t(991.500,12,'v',m),T(1004,11,18,'π',m+';margin-top:12px'),t(1015.500,6,'.')],'margin-top:12px');
  }
});

customElements.define('sheet-tabs', class extends View {
  css(){ return `:host{height:29px;background:#e6e6e8;border-top:1px solid #a0a0a2;border-bottom:1px solid #d8d6d6;position:relative;color:#555}
    .on{height:24px;background:#fff;border-bottom:2px solid #217346;color:#217346;font-weight:700;border-left:1px solid #aaa;border-right:1px solid #aaa;margin-top:-4px}
    .bb{height:20px;background:#fff;border:1px solid #a2a2a4;display:grid;place-items:center;color:#111}.tr{height:20px;background:#f1f1f3}.v{height:20px;background:#aaa}
    .cur{position:absolute;left:460px;top:9px}`; }
  view(){ const v=x=>B(x,1,'','margin-top:-2px','v'), t=(x,w,s)=>T(x,w,15,s,'margin-top:-6px');
    return strip(0,28,[I(23,'triL','color:#c2c2c4'),I(49.500,'triR','color:#c2c2c4'),v(93),t(108,116.500,'Policy Evaluation'),
      B(240,163,strip(241,22,[T(249.500,142,15,'Policy Evaluation 2')]),'','on'),t(416.500,138,'Policy Improvement'),v(570),t(585,100.500,'Value Iteration'),v(699),I(730,'plus','margin-top:-2px'),I(904,'dots'),
      B(920,20,'<ui-icon name="triL"></ui-icon>','margin-top:-2px','bb'),B(939,481,'','margin-top:-2px','bb'),B(1420,44,'','margin-top:-2px','tr'),B(1464,20,'<ui-icon name="triR"></ui-icon>','margin-top:-2px','bb')])
      + '<ui-icon class="cur" name="cursor"></ui-icon>'; }
});

customElements.define('status-bar', class extends View {
  css(){ return `:host{height:25px;background:#f3f0ef;border-bottom:1px solid #c9c7c6;color:#555}.on{height:24px;background:#d2d0ce;display:grid;place-items:center}`; }
  view(){ const t=(x,w,s)=>T(x,w,12.200,s,'margin-top:1px');
    return strip(0,24,[t(8,291,'Seleccione el destino y presione ENTRAR o elija Pegar'),I(954,'display'),t(974,166,'Configuración de visualización'),
    B(1161,46,'<ui-icon name="vNormal"></ui-icon>','','on'),I(1224,'vPage'),I(1271,'vBreak'),I(1310,'minus'),I(1325,'slider'),I(1448,'plusS'),t(1472,31,'100%')]); }
});

customElements.define('task-bar', class extends View {
  css(){ return `:host{height:31px;overflow:hidden;background:linear-gradient(90deg,#484646 0 1290px,#2c2d30 1370px 1470px,#454545);color:#fff}
    .strip{align-items:flex-start!important}.st{height:31px;background:#26292d}.se{height:31px;background:#f2f2f2;border-top:1px solid #bbb;color:#333}.ex{height:31px;background:#6b6a69}`; }
  view(){ const i=(x,n,y)=>I(x,n,`margin-top:${y}px`);
    return strip(0,31,[B(0,57,strip(0,31,[i(18.500,'win',14)]),'','st'),B(57,405,strip(57,30,[i(72.500,'lens',13),T(104.500,200.500,18.300,'Escribe aquí para buscar.','margin-top:12px')]),'border-left:1px solid #ccc','se'),
      i(481,'cortana',13),i(538,'taskview',14),i(593.500,'edge',9),i(655,'folder',12),i(712.500,'store',10),i(772,'mail',10),i(831,'chrome',9),i(890,'note',11),i(949,'zoom',9),
      B(994,57,strip(994,31,[i(1008,'excel',11)]),'','ex'),i(1068,'snip',11),i(1216.500,'chevUp',19),i(1245,'mic',15),i(1269,'net',15),i(1298,'speaker',16),T(1331,25,15.500,'ESP','margin-top:14px'),
      [1372,65,`<div>${strip(1372,16,[T(1387,35,14.500,'20:18','margin-top:4px')])}${strip(1372,20,[T(1372,68,14.500,'24/3/2023','margin-top:10px')])}</div>`],i(1458,'notif',15)]); }
});

customElements.define('excel-window', class extends View {
  css(){ return ':host{display:flex;flex-direction:column;width:1508px;overflow:hidden}:host>*{flex:none}'; }
  view(){ return '<title-bar></title-bar><ribbon-tabs></ribbon-tabs><office-ribbon></office-ribbon><formula-bar></formula-bar><sheet-grid></sheet-grid><sheet-tabs></sheet-tabs><status-bar></status-bar><task-bar></task-bar>'; }
});
</script>
</body>
</html>
